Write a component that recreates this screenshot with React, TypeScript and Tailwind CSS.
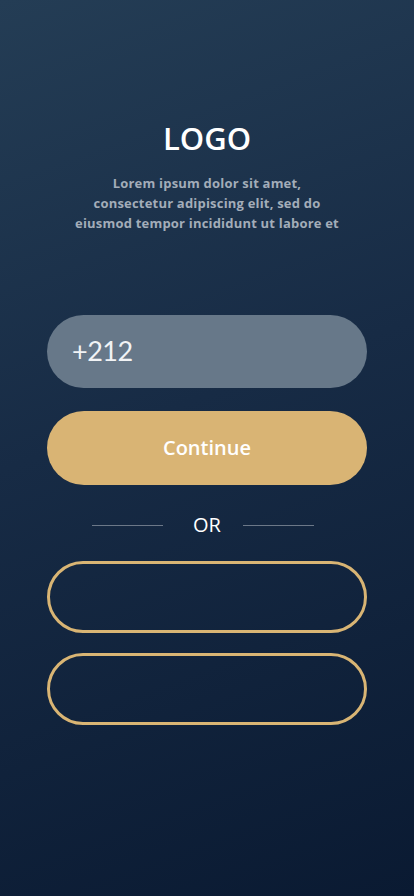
export default function App() {
  return (
    <div className="min-h-[896px] w-full bg-[linear-gradient(160deg,#243d55_0%,#172b45_45%,#0a1a32_100%)] flex flex-col items-center font-['Open_Sans',sans-serif]">
      <h1 className="mt-[117px] text-[31px] leading-[42px] font-semibold text-white">
        LOGO
      </h1>
      <p className="mt-[14px] text-center text-[13px] leading-[20px] font-bold text-[#a3adb9] tracking-[0.2px]">
        Lorem ipsum dolor sit amet,
        <br />
        consectetur adipiscing elit, sed do
        <br />
        eiusmod tempor incididunt ut labore et
      </p>

      <div className="mt-[82px] w-[320px] flex flex-col">
        <div className="h-[73px] rounded-full bg-[#677889] flex items-center px-[25px]">
          <span className="text-[27px] text-[#f1f3f5] font-['Lato',sans-serif] tracking-[-0.5px]">+212</span>
        </div>
        <button className="mt-[23px] h-[74px] rounded-full bg-[#d9b474] text-white text-[20px] font-semibold">
          Continue
        </button>

        <div className="mt-[22px] flex items-center pl-[45px]">
          <div className="w-[71px] h-px bg-[#6c7888]" />
          <span className="ml-[29px] w-[30px] text-center text-[20px] leading-[36px] text-white">OR</span>
          <div className="ml-[21px] w-[71px] h-px bg-[#6c7888]" />
        </div>

        <div className="mt-[18px] h-[72px] rounded-full border-[3px] border-[#d9b574]" />
        <div className="mt-[20px] h-[72px] rounded-full border-[3px] border-[#d9b574]" />
      </div>
    </div>
  );
}
